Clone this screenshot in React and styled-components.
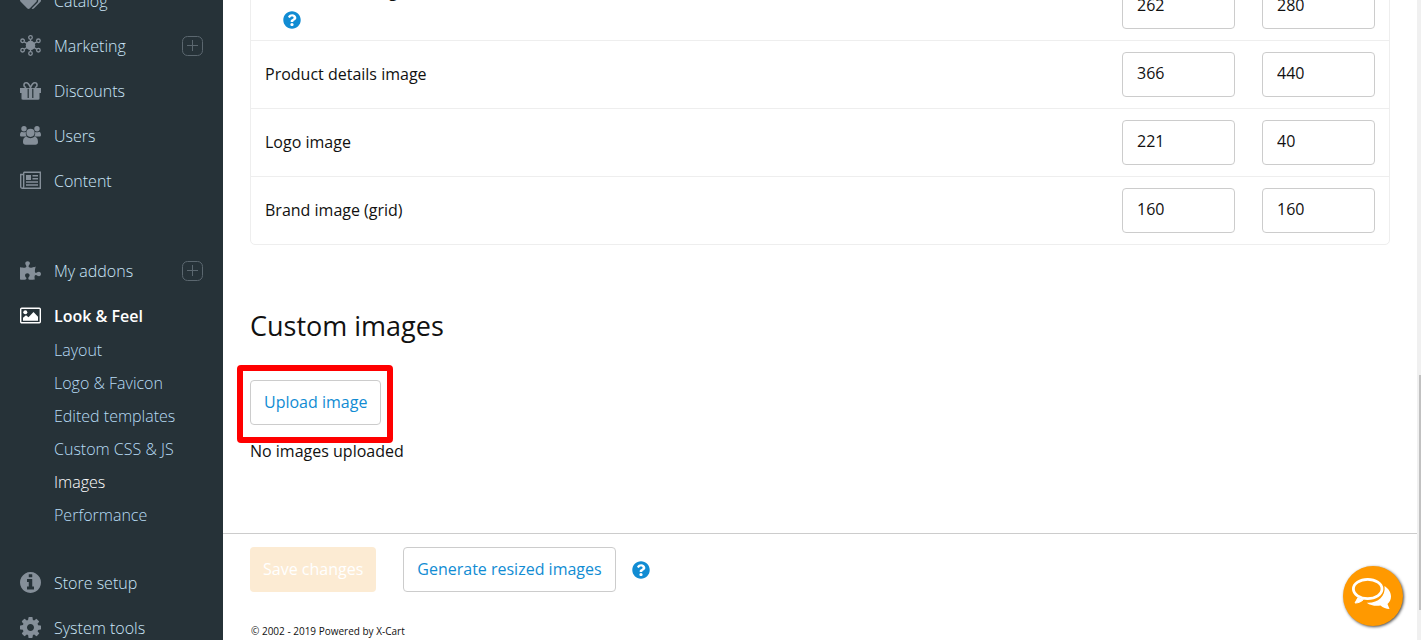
import React from "react";
import styled, { createGlobalStyle } from "styled-components";
import { FaTags, FaPuzzlePiece, FaQuestionCircle } from "react-icons/fa";

const Global = createGlobalStyle`
  * { box-sizing: border-box; }
  body { margin: 0; background: #fff; overflow: hidden; }
  body, button, input { font: 400 16px/22px "Open Sans", sans-serif; color: #111; }
`;

const Page = styled.div`
  display: flex;
  height: 100vh;
  overflow: hidden;
`;

const Sidebar = styled.nav`
  flex: 0 0 223px;
  background: #263238;
  overflow: hidden;
  font-weight: 300;
`;

const Menu = styled.ul`
  list-style: none;
  margin: -22px 0 0;
  padding: 0;
`;

const MenuItem = styled.li`
  margin-top: ${(p) => (p.$gap ? p.$gap : 0)}px;
`;

const MenuRow = styled.div`
  display: flex;
  align-items: center;
  height: 45px;
  padding: 0 20px;
`;

const MenuLink = styled.a`
  display: flex;
  flex: 1;
  align-items: center;
  gap: 13px;
  color: ${(p) => (p.$active ? "#fff" : "#cbe6f8")};
  font-weight: ${(p) => (p.$active ? 600 : 300)};
  text-decoration: none;
  svg { width: 21px; height: 21px; color: ${(p) => (p.$active ? "#fff" : "#858f99")}; }
`;

const Expand = styled.button`
  display: flex;
  padding: 0;
  border: 0;
  background: none;
  color: #5b676f;
`;

const SubMenu = styled.ul`
  list-style: none;
  margin: 0;
  padding: 1px 20px 0 54px;
  display: grid;
  gap: 11px;
`;

const SubLink = styled.a`
  color: ${(p) => (p.$active ? "#fff" : "#b8dcf5")};
  text-decoration: none;
`;

const Main = styled.main`
  flex: 1;
  min-width: 0;
  display: flex;
  flex-direction: column;
`;

const Content = styled.div`
  flex: 1;
  min-height: 0;
  overflow: hidden;
  padding: 0 27px;
`;

const SizeTable = styled.table`
  width: 100%;
  margin-top: -28px;
  border: 1px solid #eee;
  border-radius: 5px;
  border-collapse: separate;
  border-spacing: 0;
  th { text-align: left; font-weight: 400; padding: 0 14px 2px; }
  td { width: 140px; padding: 11px 14px 11px 13px; }
  tr + tr > * { border-top: 1px solid #eee; }
`;

const SizeInput = styled.input`
  display: block;
  width: 100%;
  height: 45px;
  padding: 0 14px 3px;
  border: 1px solid #ccc;
  border-radius: 4px;
  background: #fff;
`;

const HelpLine = styled.div`
  display: flex;
  padding: 9px 0 3px 18px;
`;

const HelpButton = styled.button`
  display: flex;
  padding: 0;
  border: 0;
  background: none;
  color: #118cd3;
  svg { width: 18px; height: 18px; }
`;

const Heading = styled.h2`
  margin: 63px 0 0;
  font-size: 27px;
  line-height: 36px;
  font-weight: 400;
  color: #111;
`;

const Highlight = styled.div`
  width: max-content;
  margin: 21px 0 0 -13px;
  padding: 9px 6px 12px 7px;
  border: 6px solid #f00;
  border-radius: 4px;
`;

const Button = styled.button`
  height: 45px;
  padding: 0 13px 2px;
  border: 1px solid #ccc;
  border-radius: 4px;
  background: #fff;
  color: #118cd3;
`;

const SaveButton = styled(Button)`
  border: 0;
  background: #fcebd3;
  color: #fff;
`;

const Empty = styled.p`
  margin: -3px 0 0;
`;

const Actions = styled.div`
  display: flex;
  align-items: center;
  gap: 16px;
  padding: 13px 27px;
  border-top: 1px solid #ccc;
`;

const ActionButtons = styled.div`
  display: flex;
  gap: 27px;
`;

const Footer = styled.footer`
  padding: 19px 28px 0;
  height: 35px;
  font-size: 10px;
  line-height: 14px;
`;

const ScrollTrack = styled.div`
  flex: 0 0 4px;
  display: flex;
  flex-direction: column;
  justify-content: flex-end;
  padding: 0 0 30px 2px;
  background: #f0f0f0;
`;

const ScrollThumb = styled.div`
  height: 235px;
  background: #c1c1c1;
`;

const Chat = styled.button`
  position: fixed;
  right: 18px;
  bottom: 14px;
  width: 60px;
  height: 60px;
  padding: 0;
  border: 0;
  border-radius: 50%;
  background: #f90;
  box-shadow: 1px 1px 3px rgba(0, 0, 0, 0.7);
  svg { display: block; margin: 0 auto; }
`;

const nodes = [[10.5, 2.5], [2.6, 5.8], [18.4, 5.8], [2.6, 15.2], [18.4, 15.2], [10.5, 18.5]];

const HubIcon = () => (
  <svg viewBox="0 0 21 21" fill="none" stroke="currentColor" strokeWidth="1.3">
    {nodes.map(([x, y]) => (
      <g key={`${x}-${y}`}>
        <path d={`M10.5 10.5 L${10.5 + (x - 10.5) * 0.78} ${10.5 + (y - 10.5) * 0.78}`} />
        <circle cx={x} cy={y} r="1.8" />
      </g>
    ))}
    <circle cx="10.5" cy="10.5" r="4.7" fill="currentColor" stroke="none" />
  </svg>
);

const GiftIcon = () => (
  <svg viewBox="0 0 21 21" fill="currentColor">
    <path d="M0 8h21v5h-1.500v5.500c0 .8-.5 1.200-1.200 1.200H2.700c-.7 0-1.200-.4-1.200-1.200V13H0z" />
    <path d="M8.200 8.700v9.400M12.800 8.700v9.400" stroke="#263238" strokeWidth="1.200" />
    <path d="M10.500 7.800C9.300 4.600 8 2.800 6.200 2.800c-3 0-3 4.400 0 4.600M10.500 7.800c1.200-3.200 2.500-5 4.300-5 3 0 3 4.400 0 4.600" fill="none" stroke="currentColor" strokeWidth="1.500" />
  </svg>
);

const UsersIcon = () => (
  <svg viewBox="0 0 21 21" fill="currentColor">
    <circle cx="4" cy="3.7" r="2.7" />
    <circle cx="17" cy="3.7" r="2.7" />
    <path d="M0 10c0-2 .7-3.300 2-3.300 1 .8 3 .8 4 .2-.5 2 0 3.600 1 4.600H1.600C.6 11.500 0 11 0 10zM21 10c0-2-.7-3.300-2-3.300-1 .8-3 .8-4 .2.500 2 0 3.600-1 4.600h5.400c1 0 1.600-.5 1.600-1.500z" />
    <circle cx="10.500" cy="7.800" r="4.100" />
    <path d="M3 17c0-3 1-5.300 3.600-5.300 2.200 1.900 5.600 1.900 7.800 0C17 11.700 18 14 18 17c0 1.800-1 2.700-2.600 2.700H5.600C4 19.700 3 18.800 3 17z" />
  </svg>
);

const NewsIcon = () => (
  <svg viewBox="0 0 21 21" fill="none" stroke="currentColor" strokeWidth="1.400">
    <path d="M3.700 2.200h16.600v16.100H2.500c-1.200 0-1.800-.7-1.800-1.900V4.500h3M3.700 2.200v14.200c0 1-.5 1.800-1.200 1.800M12.500 5.800H18M12.500 8.800H18M6 12h12M6 15h12" />
    <path d="M6 5h5v5H6z" fill="currentColor" stroke="none" />
  </svg>
);

const PictureIcon = () => (
  <svg viewBox="0 0 21 21" fill="none" stroke="currentColor" strokeWidth="1.400">
    <rect x=".7" y="3.200" width="19.600" height="14.600" rx="1" />
    <circle cx="5.300" cy="7.200" r="2" fill="currentColor" stroke="none" />
    <path d="M3 15.800v-3l3-2.500 2.500 1.900L13.500 7l4.500 4.800v4z" fill="currentColor" stroke="none" />
  </svg>
);

const InfoIcon = () => (
  <svg viewBox="0 128 1536 1536" fill="currentColor">
    <path d="M1024 1376v-160q0-14-9-23t-23-9h-96v-512q0-14-9-23t-23-9h-320q-14 0-23 9t-9 23v160q0 14 9 23t23 9h96v320h-96q-14 0-23 9t-9 23v160q0 14 9 23t23 9h448q14 0 23-9t9-23zm-128-896v-160q0-14-9-23t-23-9h-192q-14 0-23 9t-9 23v160q0 14 9 23t23 9h192q14 0 23-9t9-23zm640 416q0 209-103 385.500t-279.500 279.500-385.500 103-385.500-103-279.500-279.500-103-385.500 103-385.500 279.500-279.500 385.500-103 385.500 103 279.500 279.500 103 385.500z" />
  </svg>
);

const CogIcon = () => (
  <svg viewBox="0 128 1536 1536" fill="currentColor">
    <path d="M1024 896q0-106-75-181t-181-75-181 75-75 181 75 181 181 75 181-75 75-181zm512-109v222q0 12-8 23t-20 13l-185 28q-19 54-39 91 35 50 107 138 10 12 10 25t-9 23q-27 37-99 108t-94 71q-12 0-26-9l-138-108q-44 23-91 38-16 136-29 186-7 28-36 28h-222q-14 0-24.500-8.500t-11.500-21.500l-28-184q-49-16-90-37l-141 107q-10 9-25 9-14 0-25-11-126-114-165-168-7-10-7-23 0-12 8-23 15-21 51-66.500t54-70.500q-27-50-41-99l-183-27q-13-2-21-12.500t-8-23.500v-222q0-12 8-23t19-13l186-28q14-46 39-92-40-57-107-138-10-12-10-24 0-10 9-23 26-36 98.500-107.500t94.500-71.500q13 0 26 10l138 107q44-23 91-38 16-136 29-186 7-28 36-28h222q14 0 24.500 8.500t11.500 21.500l28 184q49 16 90 37l142-107q9-9 24-9 13 0 25 10 129 119 165 170 7 8 7 22 0 12-8 23-15 21-51 66.500t-54 70.500q26 50 41 98l183 28q13 2 21 12.500t8 23.500z" />
  </svg>
);

const PlusIcon = () => (
  <svg width="21" height="21" viewBox="0 0 21 21" fill="none" stroke="currentColor">
    <rect x=".5" y="1.500" width="20" height="19" rx="5" />
    <path d="M5 10.500h11M10.500 5v11" />
  </svg>
);

const ChatIcon = () => (
  <svg width="42" height="36" viewBox="0 0 42 36">
    <path d="M32.500 8c4 2.500 6.500 6.500 6.500 10.500 0 3-1.500 5.500-3.500 7.500l2 5c-3.500 0-6.500-1.500-9-3.500-5 .8-10 0-13.800-2.800C25 25.500 34 19 32.500 8z" fill="#fff" />
    <path d="M6 19.500l-3 5.500c3 0 6-1 8.500-3.500" fill="#fff" stroke="#fff" strokeLinejoin="round" />
    <ellipse cx="15.700" cy="11" rx="14.300" ry="9.600" fill="#f90" stroke="#fff" strokeWidth="2.800" />
  </svg>
);

const menuItems = [
  { label: "Catalog", Icon: FaTags },
  { label: "Marketing", Icon: HubIcon, expand: true },
  { label: "Discounts", Icon: GiftIcon },
  { label: "Users", Icon: UsersIcon },
  { label: "Content", Icon: NewsIcon },
  { label: "My addons", Icon: FaPuzzlePiece, expand: true, gap: 45 },
  {
    label: "Look & Feel",
    Icon: PictureIcon,
    active: true,
    children: ["Layout", "Logo & Favicon", "Edited templates", "Custom CSS & JS", "Images", "Performance"],
  },
  { label: "Store setup", Icon: InfoIcon, gap: 34 },
  { label: "System tools", Icon: CogIcon },
];

const sizes = [
  { label: "Products list image (mobile)", width: 262, height: 280, help: true },
  { label: "Product details image", width: 366, height: 440 },
  { label: "Logo image", width: 221, height: 40 },
  { label: "Brand image (grid)", width: 160, height: 160 },
];

const Help = () => (
  <HelpButton type="button" aria-label="Help">
    <FaQuestionCircle />
  </HelpButton>
);

export default function App() {
  return (
    <Page>
      <Global />
      <Sidebar>
        <Menu>
          {menuItems.map(({ label, Icon, expand, gap, active, children }) => (
            <MenuItem key={label} $gap={gap}>
              <MenuRow>
                <MenuLink href="#" $active={active}>
                  <Icon />
                  {label}
                </MenuLink>
                {expand && (
                  <Expand type="button" aria-label={`Expand ${label}`}>
                    <PlusIcon />
                  </Expand>
                )}
              </MenuRow>
              {children && (
                <SubMenu>
                  {children.map((name) => (
                    <li key={name}>
                      <SubLink href="#" $active={name === "Images"}>{name}</SubLink>
                    </li>
                  ))}
                </SubMenu>
              )}
            </MenuItem>
          ))}
        </Menu>
      </Sidebar>
      <Main>
        <Content>
          <SizeTable>
            <tbody>
              {sizes.map(({ label, width, height, help }) => (
                <tr key={label}>
                  <th scope="row">
                    {label}
                    {help && <HelpLine><Help /></HelpLine>}
                  </th>
                  <td><SizeInput aria-label={`${label} width`} defaultValue={width} /></td>
                  <td><SizeInput aria-label={`${label} height`} defaultValue={height} /></td>
                </tr>
              ))}
            </tbody>
          </SizeTable>
          <Heading>Custom images</Heading>
          <Highlight>
            <Button type="button">Upload image</Button>
          </Highlight>
          <Empty>No images uploaded</Empty>
        </Content>
        <Actions>
          <ActionButtons>
            <SaveButton type="button">Save changes</SaveButton>
            <Button type="button">Generate resized images</Button>
          </ActionButtons>
          <Help />
        </Actions>
        <Footer>© 2002 - 2019 Powered by X-Cart</Footer>
      </Main>
      <ScrollTrack>
        <ScrollThumb />
      </ScrollTrack>
      <Chat type="button" aria-label="Chat">
        <ChatIcon />
      </Chat>
    </Page>
  );
}
